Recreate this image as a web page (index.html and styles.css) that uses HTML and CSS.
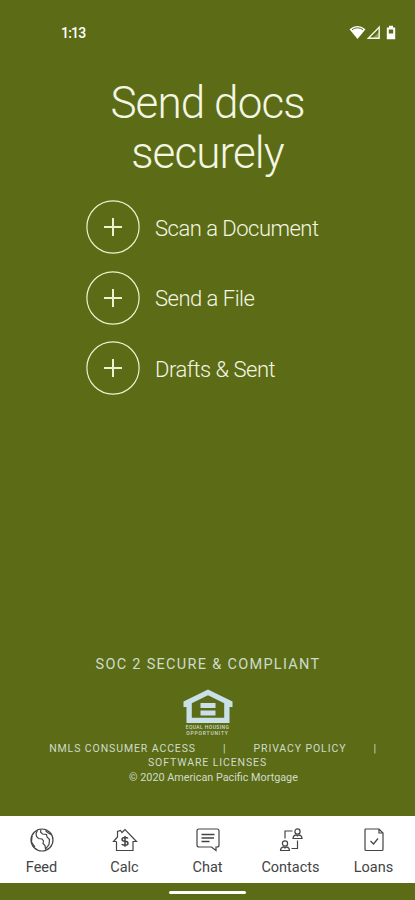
FILE: index.html
```html
<!DOCTYPE html>
<html lang="en">
<head>
    <meta charset="UTF-8">
    <meta name="viewport" content="width=device-width, initial-scale=1.0">
    <title>Send docs securely</title>
    <link rel="stylesheet" href="styles.css">
</head>
<body>
    <header class="status-bar">
        <span class="time">1:13</span>
        <svg class="status-icons" width="48" height="16" viewBox="0 0 48 16">
            <path d="M0.5 4.2Q8.500 -2.400 16.500 4.200L8.500 14Z" fill="#fff"/>
            <path d="M3 4.600Q8.500 1 14 4.600" fill="none" stroke="#5c6b16" stroke-width="1"/>
            <path d="M30.200 2.200V13.300H19.300Z" fill="none" stroke="#f3f6e2" stroke-width="1.400"/>
            <path d="M30 7V13H24Z" fill="#f3f6e2" opacity="0.35"/>
            <path d="M40 0.800h4v1.700h2.200v11.700h-8.400V2.500H40Z" fill="#fff"/>
            <path d="M39.800 4.500h4.400v4h-4.400z" fill="#5c6b16"/>
        </svg>
    </header>

    <main>
        <h1>Send docs<br>securely</h1>

        <div class="actions">
            <a class="action">
                <svg width="54" height="54" viewBox="0 0 54 54"><circle cx="27" cy="27" r="26.100"/><path d="M27 18v18M18 27h18"/></svg>
                <span>Scan a Document</span>
            </a>
            <a class="action">
                <svg width="54" height="54" viewBox="0 0 54 54"><circle cx="27" cy="27" r="26.100"/><path d="M27 18v18M18 27h18"/></svg>
                <span>Send a File</span>
            </a>
            <a class="action">
                <svg width="54" height="54" viewBox="0 0 54 54"><circle cx="27" cy="27" r="26.100"/><path d="M27 18v18M18 27h18"/></svg>
                <span>Drafts &amp; Sent</span>
            </a>
        </div>
    </main>

    <footer>
        <p class="soc">SOC 2 SECURE &amp; COMPLIANT</p>
        <div class="housing">
            <svg width="50" height="35" viewBox="0 0 50 35">
                <path fill-rule="evenodd" d="M25 0.500L49.500 12.500V18H46.500V34H3.500V18H0.500V12.500ZM25 6.200L8.800 14.200V28.800H41.200V14.200Z"/>
                <path d="M17.500 14h15v5h-15zM17.500 21.500h15v5h-15z"/>
            </svg>
            <span class="wide">EQUAL HOUSING</span>
            <span>OPPORTUNITY</span>
        </div>
        <p class="links first"><a>NMLS CONSUMER ACCESS</a><i>|</i><a>PRIVACY POLICY</a><i>|</i></p>
        <p class="links"><a>SOFTWARE LICENSES</a></p>
        <p class="copyright">© 2020 American Pacific Mortgage</p>
    </footer>

    <nav>
        <a>
            <svg width="26" height="26" viewBox="0 0 26 26">
                <circle cx="13" cy="13" r="11"/>
                <path d="M8.500 3.500L7 6.500L7.500 9.500L9.500 11.500L13 12L14.500 14L14 16.500L16 18.500L16.500 22L20 17.500L20.500 12.500L18 10L17.500 7.500L13.500 7L11.500 5L12 2.500M16.500 3.500L18.500 5.500L22 7.500M3 9L2.500 15L6 20"/>
            </svg>
            <span>Feed</span>
        </a>
        <a>
            <svg width="26" height="26" viewBox="0 0 26 26">
                <path d="M4.500 14.500V23.500H21V14.500H24.500L13 2.500L10 5.500L8.500 3.500L5.500 4.500V10L1.500 14.500H4.500"/>
                <path class="bold" d="M16 11.500Q15.500 10.500 13 10.500Q10 10.500 10 12.400Q10 14 13 14.200Q16 14.400 16 16.200Q16 18.200 13 18.200Q10.300 18.200 9.800 17M13 9V19.700"/>
            </svg>
            <span>Calc</span>
        </a>
        <a>
            <svg width="26" height="26" viewBox="0 0 26 26">
                <path d="M4 2H22Q24 2 24 4V18Q24 20 22 20H21V23.500L16.500 20H4Q2 20 2 18V4Q2 2 4 2Z"/>
                <path class="bold" d="M6.500 7.500H19.500M6.500 11H19M6.500 14.500H14.500"/>
            </svg>
            <span>Chat</span>
        </a>
        <a>
            <svg width="26" height="26" viewBox="0 0 26 26">
                <circle cx="19.500" cy="4.500" r="2.600"/>
                <path d="M15 11.500Q15 8.500 18 7.800L19.500 9L21 7.800Q24 8.500 24 11.500Z"/>
                <circle cx="7" cy="16.500" r="2.600"/>
                <path d="M2.500 23.500Q2.500 20.500 5.500 19.800L7 21L8.500 19.800Q11.500 20.500 11.500 23.500Z"/>
                <path d="M7 11.500V4H14.500M19.500 13.500V21.500H13.500"/>
            </svg>
            <span>Contacts</span>
        </a>
        <a>
            <svg width="26" height="26" viewBox="0 0 26 26">
                <path d="M5 2H18L22 6V22.500Q22 23.500 21 23.500H5Q4 23.500 4 22.500V3Q4 2 5 2ZM18 2V6H22M9.500 14L12.500 17L17 11.500"/>
            </svg>
            <span>Loans</span>
        </a>
    </nav>

    <div class="home-bar"></div>
</body>
</html>
```
FILE: styles.css
```css
* {
    margin: 0;
    padding: 0;
    box-sizing: border-box;
}

body {
    height: 900px;
    display: flex;
    flex-direction: column;
    background-color: #5c6b16;
    color: #f3f6e2;
    font-family: Roboto, sans-serif;
}

.status-bar {
    display: flex;
    justify-content: space-between;
    align-items: center;
    height: 66px;
    padding: 0 18px 0 61px;
}

.time {
    color: #fff;
    font-size: 14px;
    font-weight: 500;
    letter-spacing: -0.8px;
}

main {
    flex: 1;
    padding-top: 12px;
}

h1 {
    text-align: center;
    font-size: 44px;
    font-weight: 300;
    line-height: 50px;
    letter-spacing: -0.9px;
}

.actions {
    display: flex;
    flex-direction: column;
    gap: 16.5px;
    padding: 22px 0 0 86px;
}

.action {
    display: flex;
    align-items: center;
    gap: 15px;
    font-size: 22px;
    font-weight: 300;
    letter-spacing: -0.5px;
}

.action span {
    padding-top: 2px;
}

.action svg {
    fill: none;
    stroke: #edf2cf;
    stroke-width: 1.2;
}

.action path {
    stroke-width: 2;
}

footer {
    height: 160px;
    text-align: center;
    color: #cfdbcb;
}

.soc {
    padding: 1px 0 0 1px;
    font-size: 14.5px;
    line-height: 16px;
    letter-spacing: 1.3px;
}

.housing {
    display: flex;
    flex-direction: column;
    align-items: center;
    height: 69px;
    padding-top: 16px;
    font-size: 5px;
    font-weight: 500;
    line-height: 5.5px;
    letter-spacing: 0.8px;
}

.housing .wide {
    letter-spacing: 0.4px;
    padding-top: 1px;
}

.housing svg {
    fill: #c9e0e8;
}

.links {
    font-size: 10.5px;
    line-height: 14px;
    letter-spacing: 0.9px;
    white-space: nowrap;
}

.links.first {
    padding-left: 11px;
}

.links i {
    font-style: normal;
    margin: 0 27px;
}

.links i:last-child {
    margin-right: 0;
}

.copyright {
    padding-left: 12px;
    font-size: 10.8px;
    line-height: 15px;
}

nav {
    display: flex;
    height: 67px;
    background-color: #fff;
    color: #444;
}

nav a {
    flex: 1;
    display: flex;
    flex-direction: column;
    align-items: center;
    padding-top: 11px;
    font-size: 14.5px;
    line-height: 29px;
}

nav svg {
    fill: none;
    stroke: #444;
    stroke-width: 1.2;
}

nav .bold {
    stroke-width: 1.5;
}

.home-bar {
    align-self: center;
    width: 77px;
    height: 3px;
    margin: 8px 0 6px;
    border-radius: 2px;
    background-color: #fff;
}
```
